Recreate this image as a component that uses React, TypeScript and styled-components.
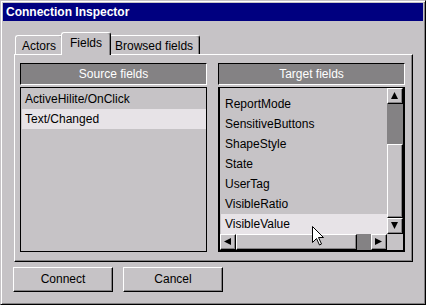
import React from 'react';
import styled, { createGlobalStyle } from 'styled-components';

const face = '#c6c3c6';
const shadow = '#848284';
const light = '#ffffff';
const dark = '#000000';
const navy = '#000080';
const selected = '#e7e3e7';

const GlobalStyle = createGlobalStyle`
  html, body {
    margin: 0;
    padding: 0;
    background: ${face};
  }

  * {
    box-sizing: border-box;
  }
`;

const Window = styled.div`
  position: relative;
  width: 426px;
  height: 305px;
  background: ${face};
  border: 1px solid;
  border-color: ${face} ${dark} ${dark} ${face};
  box-shadow: inset 1px 1px ${light}, inset -1px -1px ${shadow};
  padding: 2px;
  font-family: 'Liberation Sans', Arial, sans-serif;
  font-size: 12px;
  color: ${dark};
  overflow: hidden;
`;

const TitleBar = styled.div`
  height: 18px;
  line-height: 18px;
  background: ${navy};
  color: ${light};
  font-weight: bold;
  font-size: 12px;
  padding-left: 3px;
`;

const Body = styled.div`
  padding: 11px 10px 0 11px;
`;

const TabStrip = styled.div`
  display: flex;
  align-items: flex-end;
  height: 22px;
  position: relative;
  z-index: 1;
`;

const Tab = styled.div<{ $active?: boolean }>`
  height: ${p => (p.$active ? '23px' : '19px')};
  margin: ${p => (p.$active ? '0 -2px -1px -2px' : '0')};
  padding: ${p => (p.$active ? '2px 8px 0 8px' : '2px 6px 0 5px')};
  line-height: 16px;
  background: ${face};
  border-top: 1px solid ${light};
  border-left: 1px solid ${light};
  border-right: 1px solid ${dark};
  border-radius: 3px 3px 0 0;
  box-shadow: inset -1px 0 ${shadow};
  position: relative;
  z-index: ${p => (p.$active ? 2 : 0)};
  white-space: nowrap;

  &:first-child {
    margin-left: 1px;
    padding-left: 6px;
  }
`;

const Pane = styled.div`
  width: 399px;
  height: 208px;
  border-top: 1px solid ${light};
  border-left: 1px solid ${light};
  border-right: 1px solid ${dark};
  border-bottom: 1px solid ${dark};
  box-shadow: inset -1px -1px ${shadow};
  padding: 8px 7px 9px 5px;
  display: grid;
  grid-template-columns: 1fr 1fr;
  column-gap: 11px;
`;

const Column = styled.div`
  display: flex;
  flex-direction: column;
  gap: 2px;
  min-height: 0;
`;

const Header = styled.div`
  height: 22px;
  line-height: 20px;
  text-align: center;
  background: ${shadow};
  color: ${light};
  border: 1px solid;
  border-color: ${dark} ${light} ${light} ${dark};
`;

const ListBox = styled.div<{ $thick?: boolean }>`
  flex: 1;
  min-height: 0;
  border: ${p => (p.$thick ? '2px' : '1px')} solid ${dark};
  border-top-width: 1px;
  display: grid;
  grid-template-columns: ${p => (p.$thick ? '1fr 16px' : '1fr')};
  grid-template-rows: ${p => (p.$thick ? '1fr 16px' : '1fr')};
  overflow: hidden;
`;

const Items = styled.div<{ $top: number }>`
  padding-top: ${p => p.$top}px;
  overflow: hidden;
  min-width: 0;
`;

const Row = styled.div<{ $selected?: boolean; $indent: number }>`
  height: 20px;
  line-height: 20px;
  padding-left: ${p => p.$indent}px;
  margin-left: 1px;
  background: ${p => (p.$selected ? selected : 'transparent')};
  white-space: nowrap;
`;

const VScroll = styled.div`
  display: flex;
  flex-direction: column;
  min-height: 0;
`;

const HScroll = styled.div`
  display: flex;
  min-width: 0;
`;

const Track = styled.div<{ $vertical?: boolean }>`
  flex: 1;
  display: flex;
  flex-direction: ${p => (p.$vertical ? 'column' : 'row')};
  justify-content: ${p => (p.$vertical ? 'flex-end' : 'flex-start')};
  background: ${shadow};
`;

const Raised = styled.div`
  background: ${face};
  border: 1px solid;
  border-color: ${light} ${dark} ${dark} ${light};
  box-shadow: inset -1px -1px ${shadow};
`;

const ArrowButton = styled(Raised)`
  width: 16px;
  height: 16px;
  flex: none;
  display: flex;
  align-items: center;
  justify-content: center;
  padding: 0 1px 1px 0;
`;

const Thumb = styled(Raised)<{ $size: number; $vertical?: boolean }>`
  flex: none;
  width: ${p => (p.$vertical ? '16px' : `${p.$size}px`)};
  height: ${p => (p.$vertical ? `${p.$size}px` : '16px')};
`;

const Corner = styled.div`
  background: ${face};
`;

const ButtonRow = styled.div`
  display: flex;
  gap: 10px;
  margin: 5px 0 0 -1px;
`;

const Button = styled(Raised)`
  width: 100px;
  height: 25px;
  line-height: 22px;
  text-align: center;
`;

const Cursor = styled.svg`
  position: absolute;
  left: 311px;
  top: 225px;
  pointer-events: none;
`;

type Dir = 'up' | 'down' | 'left' | 'right';

const arrowPoints: Record<Dir, string> = {
  up: '0,7 3.5,0 7,7',
  down: '0,0 7,0 3.5,7',
  left: '7,0 7,7 0,3.5',
  right: '0,0 0,7 7,3.5',
};

const Arrow = ({ dir }: { dir: Dir }) => (
  <ArrowButton>
    <svg width={7} height={7} viewBox="0 0 7 7">
      <polygon points={arrowPoints[dir]} fill={dark} />
    </svg>
  </ArrowButton>
);

const sourceFields = ['ActiveHilite/OnClick', 'Text/Changed'];

const targetFields = [
  'ReportMode',
  'SensitiveButtons',
  'ShapeStyle',
  'State',
  'UserTag',
  'VisibleRatio',
  'VisibleValue',
];

const App = () => (
  <>
    <GlobalStyle />
    <Window>
      <TitleBar>Connection Inspector</TitleBar>
      <Body>
        <TabStrip>
          <Tab>Actors</Tab>
          <Tab $active>Fields</Tab>
          <Tab>Browsed fields</Tab>
        </TabStrip>
        <Pane>
          <Column>
            <Header>Source fields</Header>
            <ListBox>
              <Items $top={1}>
                {sourceFields.map(f => (
                  <Row key={f} $indent={3} $selected={f === 'Text/Changed'}>
                    {f}
                  </Row>
                ))}
              </Items>
            </ListBox>
          </Column>
          <Column>
            <Header>Target fields</Header>
            <ListBox $thick>
              <Items $top={6}>
                {targetFields.map(f => (
                  <Row key={f} $indent={4} $selected={f === 'VisibleValue'}>
                    {f}
                  </Row>
                ))}
              </Items>
              <VScroll>
                <Arrow dir="up" />
                <Track $vertical>
                  <Thumb $vertical $size={74} />
                </Track>
                <Arrow dir="down" />
              </VScroll>
              <HScroll>
                <Arrow dir="left" />
                <Track>
                  <Thumb $size={121} />
                </Track>
                <Arrow dir="right" />
              </HScroll>
              <Corner />
            </ListBox>
          </Column>
        </Pane>
        <ButtonRow>
          <Button>Connect</Button>
          <Button>Cancel</Button>
        </ButtonRow>
      </Body>
      <Cursor width="13" height="20" viewBox="0 0 13 20">
        <path
          d="M0.5 0.5 L0.5 16.5 L4.5 12.5 L7.5 19 L9.5 18 L6.5 11.5 L11.5 11.5 Z"
          fill={light}
          stroke={dark}
          strokeWidth="1"
        />
      </Cursor>
    </Window>
  </>
);

export default App;
